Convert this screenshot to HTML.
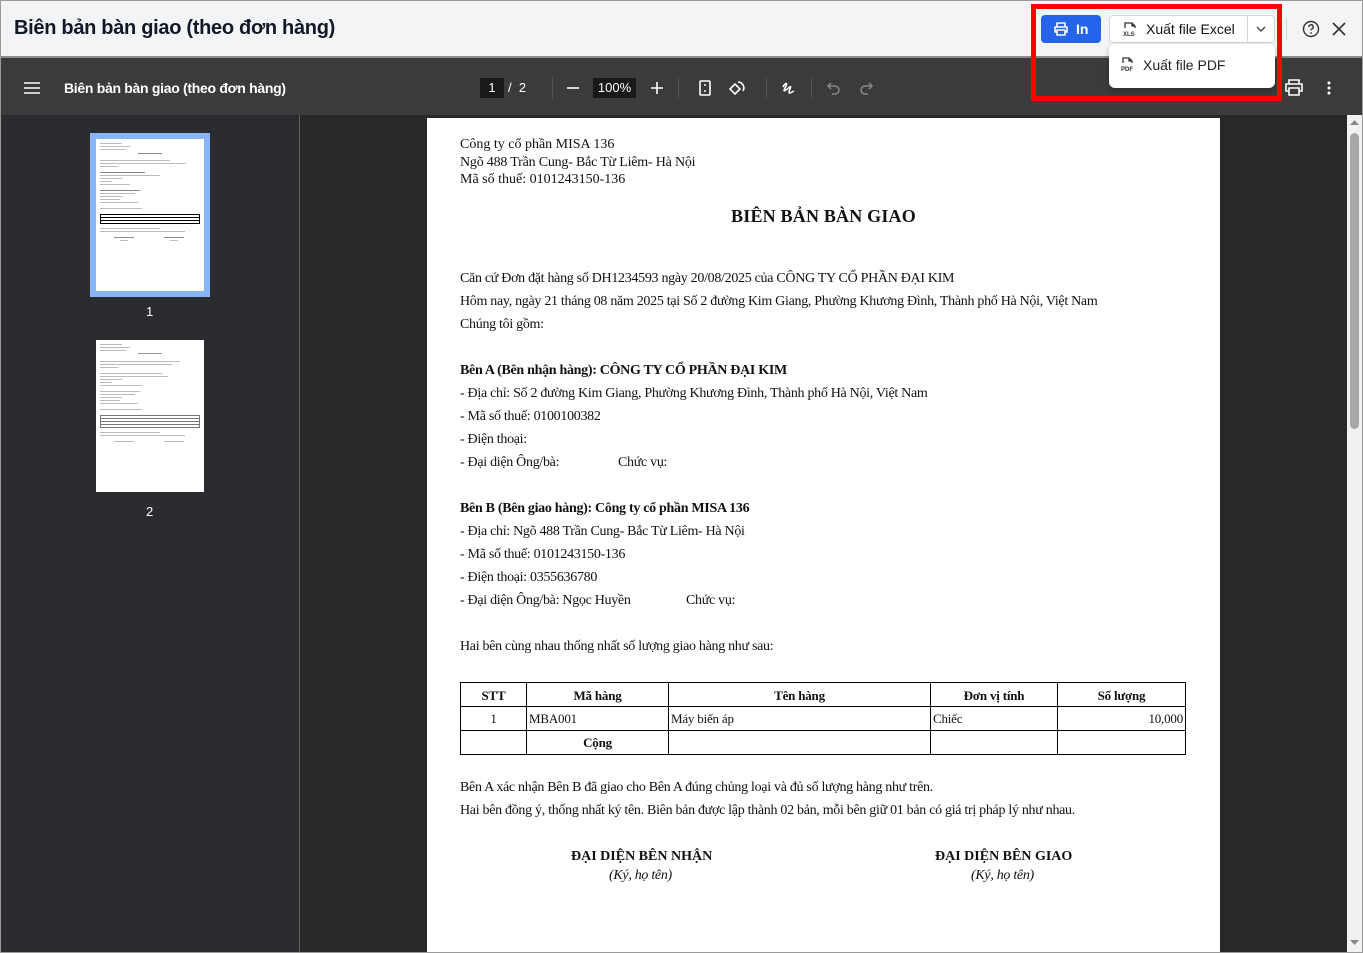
<!DOCTYPE html>
<html><head><meta charset="utf-8">
<style>
*{margin:0;padding:0;box-sizing:border-box}
body{width:1363px;height:953px;overflow:hidden;position:relative;background:#282828;font-family:"Liberation Sans",sans-serif}
.abs{position:absolute}
#hdr{left:0;top:0;width:1363px;height:58px;background:#f3f4f6;border-bottom:2px solid #8a8a8a}
#hdr .t{left:14px;top:17px;font-size:20px;color:#111827;font-weight:bold;letter-spacing:-0.3px}
#tb{left:0;top:58px;width:1363px;height:57px;background:#3b3b3b;color:#fff}
#side{left:0;top:115px;width:300px;height:838px;background:#2a2c2f;border-right:1px solid #5f5f5f}
#page{left:427px;top:118px;width:793px;height:835px;background:#fff;font-family:"Liberation Serif",serif;color:#111;font-size:14px}
#pc{position:absolute;left:0;top:2px;width:793px;height:800px}
#pc .l{position:absolute;left:33px;white-space:nowrap;letter-spacing:-0.3px}
#pc b{font-weight:bold}
table{position:absolute;left:33px;top:562px;width:726px;border-collapse:collapse;font-size:13px;letter-spacing:-0.2px}
td,th{border:1px solid #000;height:24px;padding:0 2px}
th{font-weight:bold;text-align:center;padding-top:3px}
.ic{stroke:#fff;fill:none;stroke-width:1.6}
.thumbline{position:absolute;height:1px;background:#bbb}
</style></head><body>
<div id="hdr" class="abs">
 <div class="t abs">Biên bản bàn giao (theo đơn hàng)</div>
 <div class="abs" style="left:1041px;top:15px;width:60px;height:28px;background:#2563eb;border-radius:4px;color:#fff;font-size:14px;font-weight:bold">
  <svg class="abs" style="left:12px;top:6px" width="16" height="16" viewBox="0 0 16 16"><path d="M4 6V2h8v4M4 11H2V6h12v5h-2M4 9h8v5H4z" stroke="#fff" fill="none" stroke-width="1.6" stroke-linejoin="round"/></svg>
  <span class="abs" style="left:35px;top:6px">In</span></div>
 <div class="abs" style="left:1109px;top:15px;width:166px;height:28px;background:#fff;border:1px solid #d1d5db;border-radius:4px;font-size:14px;color:#111">
  <svg class="abs" style="left:12px;top:5px" width="16" height="17" viewBox="0 0 16 17"><path d="M3 7V2h7l3 3v2M10 2v3h3" stroke="#333" fill="none" stroke-width="1.3"/><text x="1" y="15" font-size="6" font-family="Liberation Sans" font-weight="bold" fill="#333">XLS</text></svg>
  <span class="abs" style="left:36px;top:5px">Xuất file Excel</span>
  <div class="abs" style="left:137px;top:0;width:1px;height:26px;background:#d1d5db"></div>
  <svg class="abs" style="left:146px;top:9px" width="10" height="8" viewBox="0 0 10 8"><path d="M1 2l4 4 4-4" stroke="#444" fill="none" stroke-width="1.4"/></svg>
 </div>
 <div class="abs" style="left:1286px;top:18px;width:1px;height:22px;background:#d1d5db"></div>
 <svg class="abs" style="left:1302px;top:20px" width="18" height="18" viewBox="0 0 18 18"><circle cx="9" cy="9" r="7.5" stroke="#333" fill="none" stroke-width="1.4"/><path d="M6.8 7a2.2 2.2 0 1 1 3 2c-.6.3-.8.7-.8 1.4" stroke="#333" fill="none" stroke-width="1.4"/><circle cx="9" cy="13" r=".9" fill="#333"/></svg>
 <svg class="abs" style="left:1332px;top:22px" width="14" height="14" viewBox="0 0 14 14"><path d="M1 1l12 12M13 1L1 13" stroke="#333" stroke-width="1.6"/></svg>
</div>
<div id="tb" class="abs">
 <svg class="abs" style="left:24px;top:24px" width="16" height="12"><path d="M0 1h16M0 6h16M0 11h16" stroke="#fff" stroke-width="1.6"/></svg>
 <div class="abs" style="left:64px;top:22px;font-size:14px;font-weight:bold;letter-spacing:-0.3px">Biên bản bàn giao (theo đơn hàng)</div>
 <div class="abs" style="left:480px;top:20px;width:24px;height:20px;background:#191919;font-size:13px;text-align:center;line-height:20px">1</div>
 <div class="abs" style="left:508px;top:22px;font-size:13px">/ &nbsp;2</div>
 <div class="abs" style="left:552px;top:19px;width:1px;height:22px;background:#555"></div>
 <svg class="abs" style="left:567px;top:29px" width="12" height="2"><path d="M0 1h12" stroke="#fff" stroke-width="1.6"/></svg>
 <div class="abs" style="left:593px;top:20px;width:43px;height:20px;background:#191919;font-size:13px;text-align:center;line-height:20px">100%</div>
 <svg class="abs" style="left:651px;top:24px" width="12" height="12"><path d="M0 6h12M6 0v12" stroke="#fff" stroke-width="1.6"/></svg>
 <div class="abs" style="left:678px;top:19px;width:1px;height:22px;background:#555"></div>
 <svg class="abs" style="left:699px;top:22px" width="12" height="16"><rect x="1" y="1" width="10" height="14" rx="1" class="ic"/><path d="M6 4v2M6 10v2" stroke="#fff" stroke-width="1.4"/></svg>
 <svg class="abs" style="left:728px;top:21px" width="18" height="18" viewBox="0 0 18 18"><path d="M2 10l5-5 5 5-5 5z" class="ic"/><path d="M10 3a6 6 0 0 1 5 9" class="ic"/></svg>
 <div class="abs" style="left:766px;top:19px;width:1px;height:22px;background:#555"></div>
 <svg class="abs" style="left:781px;top:22px" width="16" height="16" viewBox="0 0 16 16"><path d="M2 7c2-4 5-5 3-1s-3 6 0 4 6-6 4-1-1 5 4 2" class="ic"/></svg>
 <div class="abs" style="left:811px;top:19px;width:1px;height:22px;background:#555"></div>
 <svg class="abs" style="left:827px;top:23px" width="14" height="14" viewBox="0 0 14 14"><path d="M4 2L1 5l3 3M1 5h7a4 4 0 0 1 0 8H5" stroke="#888" fill="none" stroke-width="1.5"/></svg>
 <svg class="abs" style="left:859px;top:23px" width="14" height="14" viewBox="0 0 14 14"><path d="M10 2l3 3-3 3M13 5H6a4 4 0 0 0 0 8h3" stroke="#888" fill="none" stroke-width="1.5"/></svg>
 <svg class="abs" style="left:1285px;top:21px" width="18" height="17" viewBox="0 0 18 17"><path d="M4 5V1h10v4M4 12H1V5h16v7h-3M4 9h10v7H4z" stroke="#fff" fill="none" stroke-width="1.6"/></svg>
 <svg class="abs" style="left:1327px;top:23px" width="4" height="14"><circle cx="2" cy="2" r="1.5" fill="#fff"/><circle cx="2" cy="7" r="1.5" fill="#fff"/><circle cx="2" cy="12" r="1.5" fill="#fff"/></svg>
</div>
<div class="abs" style="left:1109px;top:44px;width:166px;height:44px;background:#fff;border-radius:6px;box-shadow:0 2px 6px rgba(0,0,0,.25);font-size:14px;color:#222">
 <svg class="abs" style="left:12px;top:12px" width="14" height="17" viewBox="0 0 14 17"><path d="M2 7V2h6l3 3v2M8 2v3h3" stroke="#333" fill="none" stroke-width="1.3"/><text x="0" y="15" font-size="6" font-family="Liberation Sans" font-weight="bold" fill="#333">PDF</text></svg>
 <span class="abs" style="left:34px;top:13px">Xuất file PDF</span>
</div>
<div class="abs" style="left:1031px;top:4px;width:251px;height:97px;border:5px solid #ff0000"></div>

<div id="side" class="abs">
 <div class="abs" style="left:90px;top:18px;width:120px;height:164px;background:#8ab4f8"></div>
 <div class="abs" style="left:96px;top:24px;width:108px;height:152px;background:#fff"></div>
 <div class="abs" style="left:146px;top:189px;color:#fff;font-size:13px">1</div>
 <div class="abs" style="left:96px;top:225px;width:108px;height:152px;background:#fff"></div>
 <div class="abs" style="left:146px;top:389px;color:#fff;font-size:13px">2</div>
</div>
<div class="abs" style="left:96px;top:139px;width:108px;height:152px">
 <div class="thumbline" style="left:4px;top:4px;width:22px"></div><div class="thumbline" style="left:4px;top:7px;width:30px"></div><div class="thumbline" style="left:4px;top:10px;width:26px"></div>
 <div class="thumbline" style="left:42px;top:14px;width:24px;background:#888"></div>
 <div class="thumbline" style="left:4px;top:21px;width:70px"></div><div class="thumbline" style="left:4px;top:24px;width:86px"></div><div class="thumbline" style="left:4px;top:27px;width:18px"></div>
 <div class="thumbline" style="left:4px;top:33px;width:45px;background:#888"></div><div class="thumbline" style="left:4px;top:36px;width:60px"></div><div class="thumbline" style="left:4px;top:39px;width:22px"></div><div class="thumbline" style="left:4px;top:42px;width:12px"></div><div class="thumbline" style="left:4px;top:45px;width:30px"></div>
 <div class="thumbline" style="left:4px;top:51px;width:40px;background:#888"></div><div class="thumbline" style="left:4px;top:54px;width:35px"></div><div class="thumbline" style="left:4px;top:57px;width:22px"></div><div class="thumbline" style="left:4px;top:60px;width:20px"></div><div class="thumbline" style="left:4px;top:63px;width:38px"></div>
 <div class="thumbline" style="left:4px;top:69px;width:42px"></div>
 <div class="abs" style="left:4px;top:75px;width:100px;height:10px;border:1px solid #000"></div>
 <div class="thumbline" style="left:4px;top:78px;width:100px;background:#000"></div><div class="thumbline" style="left:4px;top:81px;width:100px;background:#000"></div>
 <div class="thumbline" style="left:4px;top:89px;width:60px"></div><div class="thumbline" style="left:4px;top:92px;width:85px"></div>
 <div class="thumbline" style="left:18px;top:98px;width:20px;background:#888"></div><div class="thumbline" style="left:68px;top:98px;width:20px;background:#888"></div>
 <div class="thumbline" style="left:24px;top:101px;width:8px"></div><div class="thumbline" style="left:74px;top:101px;width:8px"></div>
</div>
<div class="abs" style="left:96px;top:340px;width:108px;height:152px">
 <div class="thumbline" style="left:4px;top:4px;width:22px"></div><div class="thumbline" style="left:4px;top:7px;width:30px"></div><div class="thumbline" style="left:4px;top:10px;width:26px"></div>
 <div class="thumbline" style="left:42px;top:13px;width:24px;background:#999"></div>
 <div class="thumbline" style="left:4px;top:21px;width:80px"></div><div class="thumbline" style="left:4px;top:24px;width:72px"></div><div class="thumbline" style="left:4px;top:27px;width:18px"></div>
 <div class="thumbline" style="left:4px;top:33px;width:62px"></div><div class="thumbline" style="left:4px;top:36px;width:68px"></div><div class="thumbline" style="left:4px;top:39px;width:22px"></div><div class="thumbline" style="left:4px;top:42px;width:12px"></div><div class="thumbline" style="left:4px;top:45px;width:42px"></div>
 <div class="thumbline" style="left:4px;top:51px;width:40px"></div><div class="thumbline" style="left:4px;top:54px;width:35px"></div><div class="thumbline" style="left:4px;top:57px;width:22px"></div><div class="thumbline" style="left:4px;top:60px;width:20px"></div><div class="thumbline" style="left:4px;top:63px;width:38px"></div>
 <div class="thumbline" style="left:4px;top:69px;width:42px"></div>
 <div class="abs" style="left:4px;top:75px;width:100px;height:13px;border:1px solid #777"></div>
 <div class="thumbline" style="left:4px;top:78px;width:100px;background:#777"></div><div class="thumbline" style="left:4px;top:81px;width:100px;background:#777"></div><div class="thumbline" style="left:4px;top:84px;width:100px;background:#777"></div>
 <div class="thumbline" style="left:4px;top:92px;width:60px"></div><div class="thumbline" style="left:4px;top:95px;width:85px"></div>
 <div class="thumbline" style="left:18px;top:101px;width:20px"></div><div class="thumbline" style="left:68px;top:101px;width:20px"></div>
</div>

<div id="page" class="abs"><div id="pc">
 <div class="l" style="top:17px;letter-spacing:0">Công ty cổ phần MISA 136</div>
 <div class="l" style="top:35px;letter-spacing:-0.2px">Ngõ 488 Trần Cung- Bắc Từ Liêm- Hà Nội</div>
 <div class="l" style="top:52px;letter-spacing:0">Mã số thuế: 0101243150-136</div>
 <div class="l" style="top:86px;left:0;width:793px;text-align:center;font-size:18px;font-weight:bold;letter-spacing:0.2px">BIÊN BẢN BÀN GIAO</div>
 <div class="l" style="top:151px">Căn cứ Đơn đặt hàng số DH1234593 ngày 20/08/2025 của CÔNG TY CỔ PHẦN ĐẠI KIM</div>
 <div class="l" style="top:174px;letter-spacing:-0.3px">Hôm nay, ngày 21 tháng 08 năm 2025 tại Số 2 đường Kim Giang, Phường Khương Đình, Thành phố Hà Nội, Việt Nam</div>
 <div class="l" style="top:197px">Chúng tôi gồm:</div>
 <div class="l" style="top:243px"><b>Bên A (Bên nhận hàng): CÔNG TY CỔ PHẦN ĐẠI KIM</b></div>
 <div class="l" style="top:266px">- Địa chỉ: Số 2 đường Kim Giang, Phường Khương Đình, Thành phố Hà Nội, Việt Nam</div>
 <div class="l" style="top:289px">- Mã số thuế: 0100100382</div>
 <div class="l" style="top:312px">- Điện thoại:</div>
 <div class="l" style="top:335px">- Đại diện Ông/bà:</div><div class="l" style="top:335px;left:191px">Chức vụ:</div>
 <div class="l" style="top:381px"><b>Bên B (Bên giao hàng): Công ty cổ phần MISA 136</b></div>
 <div class="l" style="top:404px">- Địa chỉ: Ngõ 488 Trần Cung- Bắc Từ Liêm- Hà Nội</div>
 <div class="l" style="top:427px">- Mã số thuế: 0101243150-136</div>
 <div class="l" style="top:450px">- Điện thoại: 0355636780</div>
 <div class="l" style="top:473px">- Đại diện Ông/bà: Ngọc Huyền</div><div class="l" style="top:473px;left:259px">Chức vụ:</div>
 <div class="l" style="top:519px">Hai bên cùng nhau thống nhất số lượng giao hàng như sau:</div>
 <table>
  <tr><th style="width:66px">STT</th><th style="width:142px">Mã hàng</th><th style="width:262px">Tên hàng</th><th style="width:127px">Đơn vị tính</th><th>Số lượng</th></tr>
  <tr><td style="text-align:center">1</td><td>MBA001</td><td>Máy biến áp</td><td>Chiếc</td><td style="text-align:right">10,000</td></tr>
  <tr><td></td><td style="text-align:center;font-weight:bold">Cộng</td><td></td><td></td><td></td></tr>
 </table>
 <div class="l" style="top:660px">Bên A xác nhận Bên B đã giao cho Bên A đúng chủng loại và đủ số lượng hàng như trên.</div>
 <div class="l" style="top:683px">Hai bên đồng ý, thống nhất ký tên. Biên bản được lập thành 02 bản, mỗi bên giữ 01 bản có giá trị pháp lý như nhau.</div>
 <div class="l" style="top:729px;left:144px;font-weight:bold;letter-spacing:0">ĐẠI DIỆN BÊN NHẬN</div>
 <div class="l" style="top:748px;left:182px;font-style:italic">(Ký, họ tên)</div>
 <div class="l" style="top:729px;left:508px;font-weight:bold;letter-spacing:0">ĐẠI DIỆN BÊN GIAO</div>
 <div class="l" style="top:748px;left:544px;font-style:italic">(Ký, họ tên)</div>
</div></div>
<div class="abs" style="left:1347px;top:115px;width:15px;height:838px;background:#f1f1f1"></div>
<svg class="abs" style="left:1350px;top:119px" width="9" height="6"><path d="M0 6l4.5-5 4.5 5z" fill="#888"/></svg>
<div class="abs" style="left:1350px;top:133px;width:9px;height:296px;background:#a8a8a8;border-radius:5px"></div>
<svg class="abs" style="left:1350px;top:940px" width="9" height="6"><path d="M0 0l4.5 5 4.5-5z" fill="#888"/></svg>
<div class="abs" style="left:0;top:0;width:1363px;height:953px;border:1px solid #9a9a9a;pointer-events:none"></div>
</body></html>
